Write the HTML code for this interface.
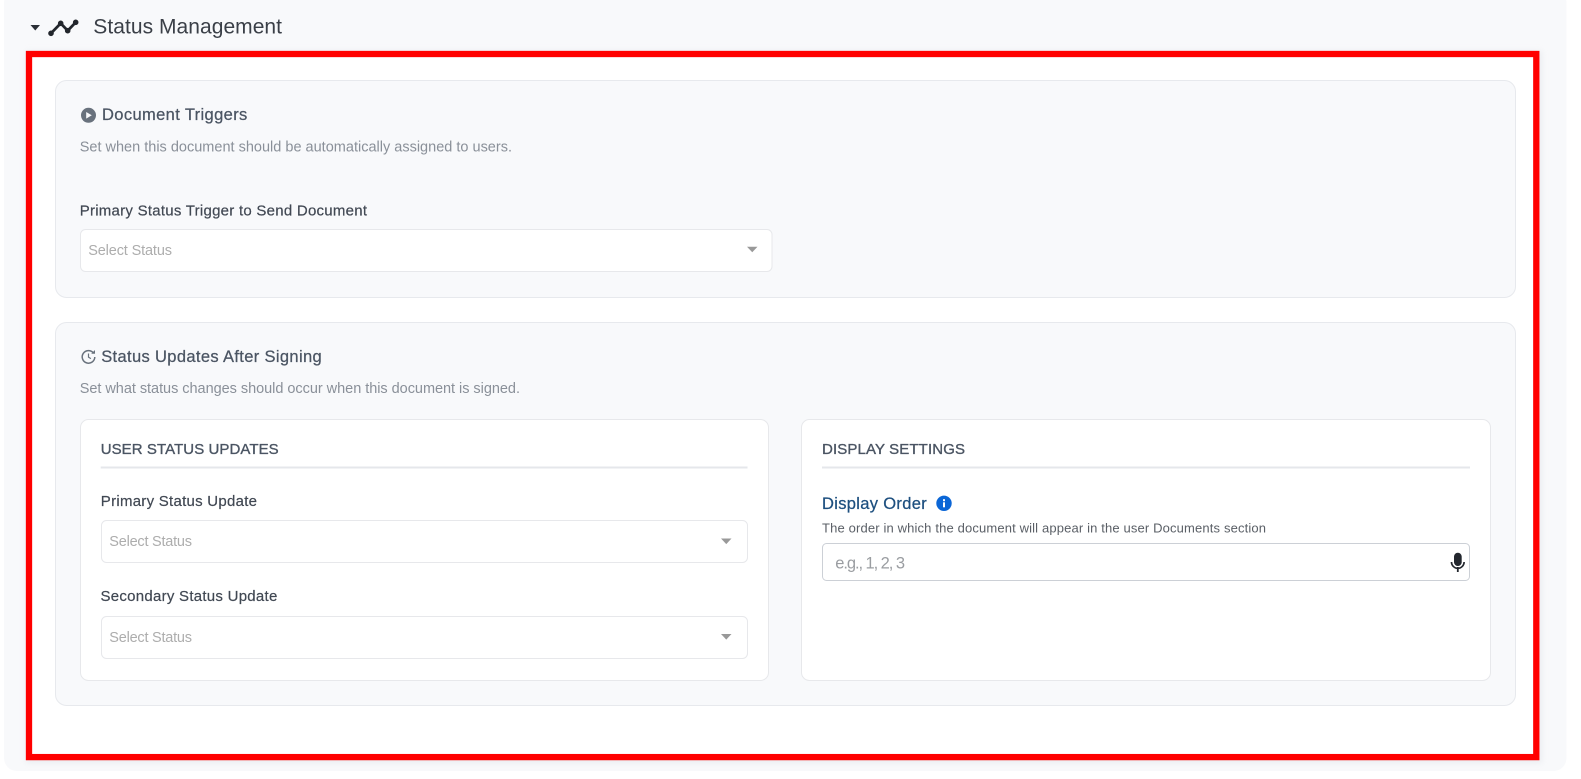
<!DOCTYPE html>
<html lang="en">
<head>
<meta charset="utf-8">
<title>Status Management</title>
<style>
html,body{margin:0;padding:0;background:#fff;width:1581px;height:779px;overflow:hidden}
svg{display:block}
text{font-family:"Liberation Sans",sans-serif}
.h{font-size:16.5px;fill:#4b5563;stroke:#4b5563;stroke-width:.25px}
.d{font-size:14.5px;fill:#8a9099}
.l{font-size:15px;fill:#414853;stroke:#414853;stroke-width:.2px}
.p{font-size:14.5px;fill:#adadad}
.t{font-size:15px;fill:#4b5563;stroke:#4b5563;stroke-width:.35px}
.box{fill:#fff;stroke:#e7e8eb;stroke-width:1}
.panel{fill:#f8f9fb;stroke:#e7e9ed;stroke-width:1}
</style>
</head>
<body>
<svg width="1581" height="779" viewBox="0 0 1581 779" xmlns="http://www.w3.org/2000/svg">
  <defs>
    <filter id="s" x="-2%" y="-2%" width="104%" height="104%"><feGaussianBlur stdDeviation="3"/></filter>
  </defs>
  <rect x="4" y="-10" width="1562.500" height="781" rx="13" fill="#f8f9fb"/>
  <rect x="26" y="51" width="1516" height="712" fill="#dfe1e6" opacity=".5" filter="url(#s)"/>
  <rect x="29" y="54" width="1507.300" height="703.100" fill="#fff"/>
  <rect x="29" y="54" width="1507.300" height="703.100" fill="none" stroke="#ff0000" stroke-width="6.300"/>

  <path d="M30.500 25h9.500l-4.750 5.500z" fill="#2b2f36"/>
  <path d="M51 33.300L60.700 23.300L67.700 30.700L75.700 22.300" fill="none" stroke="#22262c" stroke-width="2.800" stroke-linecap="round" stroke-linejoin="round"/>
  <circle cx="51" cy="33.300" r="2.800" fill="#22262c"/><circle cx="60.700" cy="23.300" r="2.800" fill="#22262c"/><circle cx="67.700" cy="30.700" r="2.800" fill="#22262c"/><circle cx="75.700" cy="22.300" r="2.800" fill="#22262c"/>
  <text x="93.300" y="33.300" font-size="21" fill="#3a3f47" textLength="188.700">Status Management</text>

  <rect class="panel" x="55.500" y="80.500" width="1460" height="217" rx="11"/>
  <circle cx="88.500" cy="115.300" r="7.500" fill="#69727d"/>
  <path d="M86.200 112l5.600 3.300-5.600 3.300z" fill="#f8f9fb"/>
  <text class="h" x="102" y="120" textLength="145.300">Document Triggers</text>
  <text class="d" x="79.700" y="151.700" textLength="432.300">Set when this document should be automatically assigned to users.</text>
  <text class="l" x="79.700" y="215.500" textLength="287.300">Primary Status Trigger to Send Document</text>
  <rect class="box" x="80.500" y="229.500" width="691.500" height="42" rx="5"/>
  <text class="p" x="88.200" y="255" textLength="83.800">Select Status</text>
  <path d="M747 246.700h10.500l-5.250 5.600z" fill="#999"/>

  <rect class="panel" x="55.500" y="322.500" width="1460" height="383" rx="11"/>
  <path d="M93.300 352.800A6.300 6.300 0 1 0 94.800 357" fill="none" stroke="#69727d" stroke-width="1.500"/>
  <path d="M95 350v3.800h-3.800z" fill="#69727d"/>
  <path d="M88.500 353.500v3.700l2.400 1.400" fill="none" stroke="#69727d" stroke-width="1.200"/>
  <text class="h" x="101.200" y="362" textLength="220.500">Status Updates After Signing</text>
  <text class="d" x="79.700" y="393" textLength="440.300">Set what status changes should occur when this document is signed.</text>

  <rect class="box" x="80.500" y="419.500" width="688" height="261" rx="8"/>
  <text class="t" x="100.700" y="454" textLength="178">USER STATUS UPDATES</text>
  <rect x="100.700" y="466.500" width="646.800" height="2" fill="#e5e7eb"/>
  <text class="l" x="100.800" y="506" textLength="156.200">Primary Status Update</text>
  <rect class="box" x="101.500" y="520.500" width="646" height="42" rx="5"/>
  <text class="p" x="109.300" y="546" textLength="82.700">Select Status</text>
  <path d="M721 538.500h10.500l-5.250 5.600z" fill="#999"/>
  <text class="l" x="100.500" y="600.800" textLength="176.800">Secondary Status Update</text>
  <rect class="box" x="101.500" y="616.500" width="646" height="42" rx="5"/>
  <text class="p" x="109.300" y="642" textLength="82.700">Select Status</text>
  <path d="M721 634h10.500l-5.250 5.600z" fill="#999"/>

  <rect class="box" x="801.500" y="419.500" width="689" height="261" rx="8"/>
  <text class="t" x="822" y="454" textLength="143">DISPLAY SETTINGS</text>
  <rect x="822" y="466.500" width="648" height="2" fill="#e5e7eb"/>
  <text x="822" y="509" font-size="16.500" fill="#1d4f7f" stroke="#1d4f7f" stroke-width=".25" textLength="104.700">Display Order</text>
  <circle cx="944" cy="503.300" r="7.700" fill="#0b66d6"/>
  <rect x="943" y="502.300" width="2" height="5" fill="#fff"/><rect x="943" y="499.200" width="2" height="2" fill="#fff"/>
  <text x="822" y="532.700" font-size="13" fill="#5a5f66" textLength="444">The order in which the document will appear in the user Documents section</text>
  <rect x="822.500" y="543.500" width="647" height="37" rx="4" fill="#fff" stroke="#ccd0d6"/>
  <text x="835.300" y="568.300" font-size="16.500" fill="#9a9da1" textLength="69.700">e.g., 1, 2, 3</text>
  <rect x="1454" y="552.700" width="7.700" height="13.300" rx="3.800" fill="#23272e"/>
  <path d="M1451.500 562a6.300 6.300 0 0 0 12.600 0" fill="none" stroke="#23272e" stroke-width="1.700"/>
  <rect x="1456.900" y="567" width="1.800" height="5" fill="#23272e"/>
</svg>
</body>
</html>
